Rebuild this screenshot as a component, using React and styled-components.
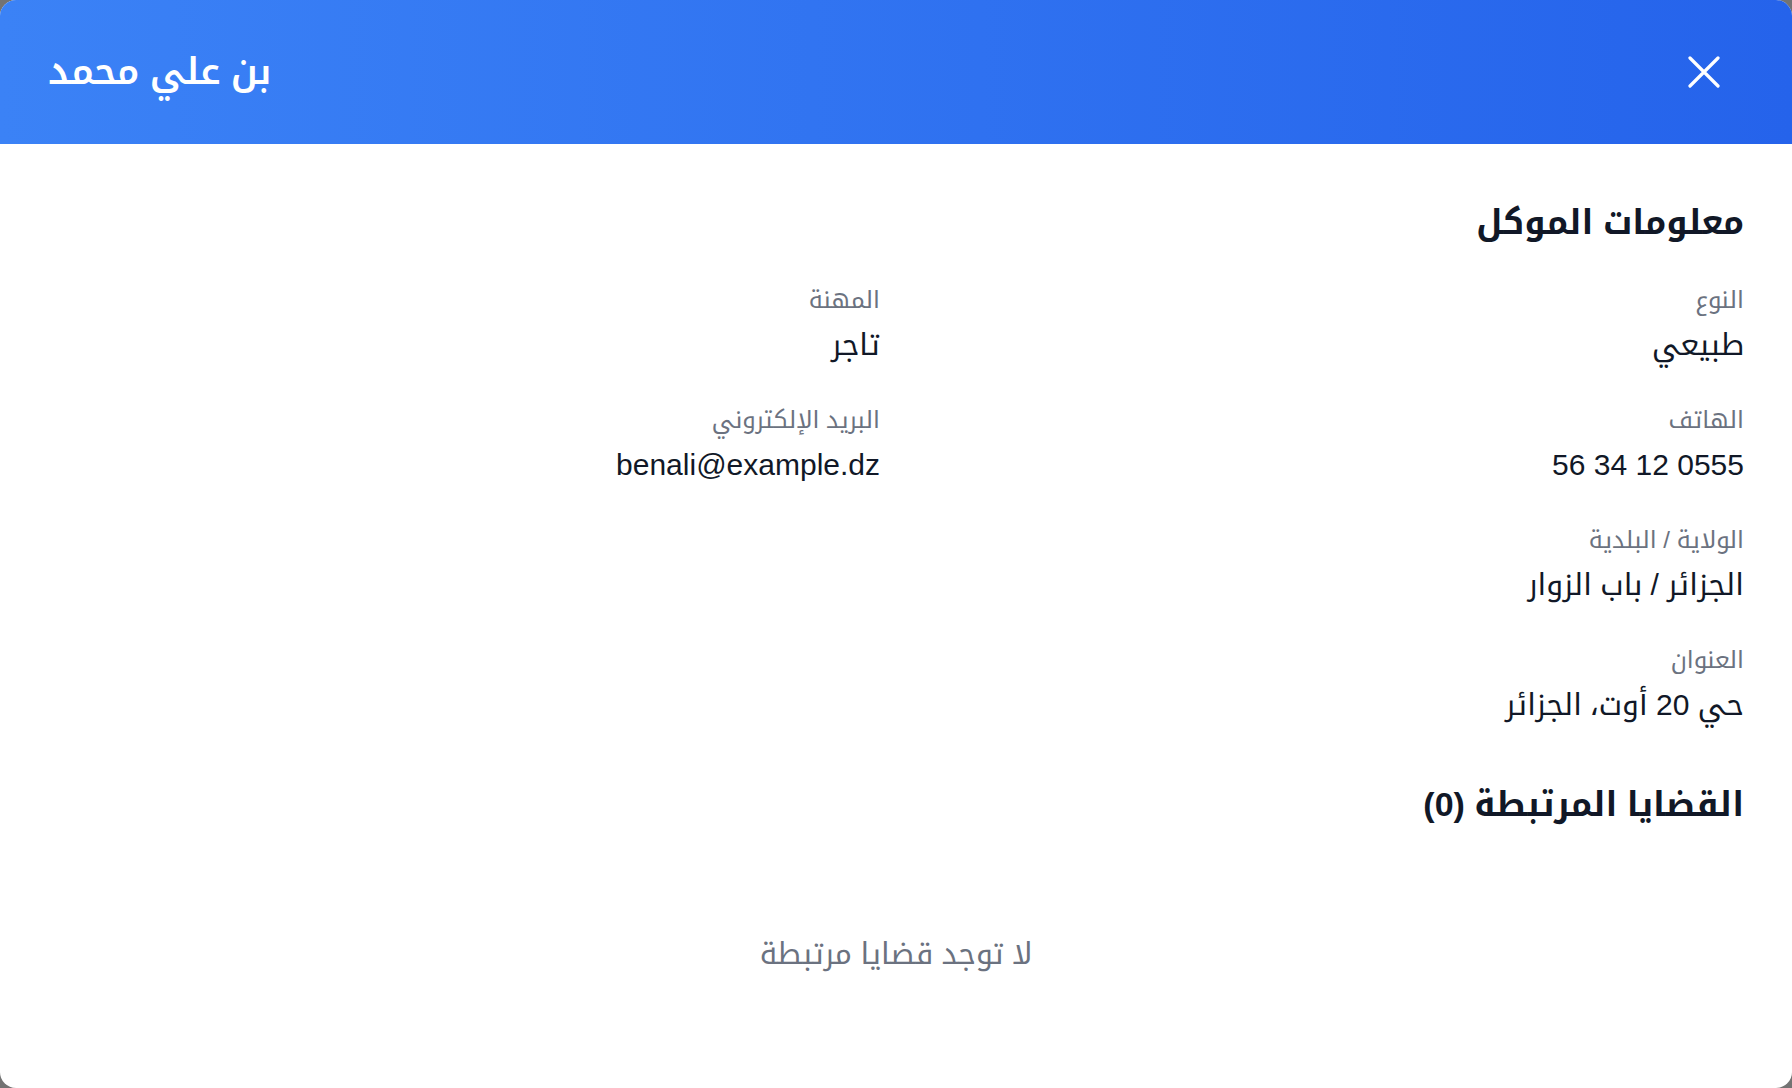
import React from "react";
import styled, { createGlobalStyle } from "styled-components";

const Global = createGlobalStyle`
  html, body { margin: 0; padding: 0; background: #737373; }
  body { font-family: "Liberation Sans", "Noto Kufi Arabic", "Noto Sans Arabic", sans-serif; }
  * { box-sizing: border-box; }
`;

const Modal = styled.div`
  direction: rtl;
  width: 100vw;
  height: 100vh;
  background: #ffffff;
  border-radius: 16px;
  overflow: hidden;
  display: flex;
  flex-direction: column;
`;

const Header = styled.header`
  height: 144px;
  flex-shrink: 0;
  display: flex;
  align-items: center;
  justify-content: space-between;
  padding: 0 48px;
  background: linear-gradient(to right, #3b82f6, #2563eb);
  color: #ffffff;
`;

const Title = styled.h2`
  margin: 0;
  font-size: 37px;
  font-weight: 600;
  line-height: 1.4;
`;

const CloseButton = styled.button`
  width: 56px;
  height: 56px;
  margin-right: 12px;
  border: none;
  background: transparent;
  color: #ffffff;
  display: flex;
  align-items: center;
  justify-content: center;
  padding: 0;
  cursor: pointer;
`;

const Body = styled.div`
  padding: 53px 48px 48px;
  display: flex;
  flex-direction: column;
`;

const SectionTitle = styled.h3`
  margin: 0 0 ${(p) => p.$mb || 0}px;
  font-size: 34px;
  font-weight: 700;
  color: #111827;
  line-height: 1.5;
`;

const Grid = styled.div`
  display: grid;
  grid-template-columns: 1fr 1fr;
  column-gap: 32px;
  row-gap: 35px;
  margin-bottom: 52px;
`;

const Field = styled.div`
  display: flex;
  flex-direction: column;
  gap: 4px;
`;

const Label = styled.span`
  font-size: 24px;
  color: #6b7280;
  line-height: 1.5;
`;

const Value = styled.span`
  font-size: 30px;
  color: #111827;
  line-height: 1.5;
`;

const Empty = styled.p`
  margin: 101px 0 0;
  text-align: center;
  font-size: 30px;
  color: #6b7280;
  line-height: 1.5;
`;

const fields = [
  ["النوع", "طبيعي"],
  ["المهنة", "تاجر"],
  ["الهاتف", "0555 12 34 56"],
  ["البريد الإلكتروني", "benali@example.dz"],
  ["الولاية / البلدية", "الجزائر / باب الزوار"],
  null,
  ["العنوان", "حي 20 أوت، الجزائر"],
];

export default function App() {
  return (
    <>
      <Global />
      <Modal>
        <Header>
          <CloseButton aria-label="إغلاق">
            <svg width="32" height="32" viewBox="0 0 32 32" fill="none" stroke="currentColor" strokeWidth="3.2" strokeLinecap="round">
              <path d="M2 2L30 30M30 2L2 30" />
            </svg>
          </CloseButton>
          <Title>بن علي محمد</Title>
        </Header>
        <Body>
          <SectionTitle $mb={34}>معلومات الموكل</SectionTitle>
          <Grid>
            {fields.map((f, i) =>
              f ? (
                <Field key={i}>
                  <Label>{f[0]}</Label>
                  <Value>{f[1]}</Value>
                </Field>
              ) : (
                <div key={i} />
              )
            )}
          </Grid>
          <SectionTitle>القضايا المرتبطة (0)</SectionTitle>
          <Empty>لا توجد قضايا مرتبطة</Empty>
        </Body>
      </Modal>
    </>
  );
}
